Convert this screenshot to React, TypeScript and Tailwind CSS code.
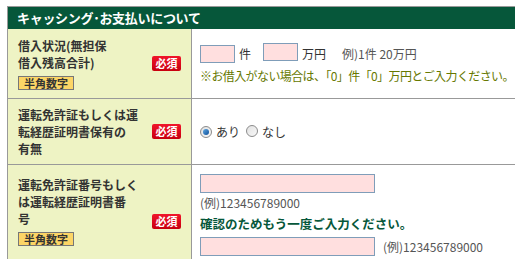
import React from 'react';

const font = { fontFamily: '"Noto Sans CJK JP", "Noto Sans", sans-serif' };

function Required() {
  return (
    <span className="inline-flex h-[15px] w-[29px] shrink-0 items-center justify-center rounded-[2px] bg-gradient-to-b from-[#f0142a] to-[#c8000e] text-[11px] font-bold leading-none text-white">
      必須
    </span>
  );
}

function HalfWidth() {
  return (
    <span className="mt-[5px] inline-flex h-[14px] w-[56px] items-center justify-center border border-[#777] bg-[#fcd566] text-[11px] font-bold leading-none text-[#333]">
      半角数字
    </span>
  );
}

function Radio({ checked }: { checked?: boolean }) {
  return (
    <span className="inline-flex h-[12px] w-[12px] items-center justify-center rounded-full border border-[#8b8b8b] bg-gradient-to-br from-[#e2e2e2] to-[#f8f8f8]">
      {checked && <span className="h-[6px] w-[6px] rounded-full bg-gradient-to-br from-[#5fa8e0] to-[#0a4f9a]" />}
    </span>
  );
}

function Input({ wide }: { wide?: boolean }) {
  return (
    <span
      className={`inline-block border border-[#7f9db9] bg-[#ffdfdf] ${wide ? 'h-[19px] w-[175px]' : 'h-[18px] w-[35px]'}`}
    />
  );
}

export default function App() {
  return (
    <div className="h-[259px] w-[515px] overflow-hidden bg-white pl-[7px] pt-[6px] text-[#333]" style={font}>
      <div className="w-[560px] border border-[#999]">
        {/* Header */}
        <div className="flex h-[22px] items-center bg-[#06573a] pl-[9px] text-[13px] font-bold tracking-[-0.3px] text-white">
          キャッシング･お支払いについて
        </div>

        {/* Row 1 */}
        <div className="flex h-[70px] border-b border-[#999]">
          <div className="flex w-[184px] shrink-0 items-center justify-between border-r border-[#999] bg-[#eef3c4] pl-[10px] pr-[10px]">
            <div className="flex flex-col items-start">
              <div className="whitespace-nowrap text-[12px] font-bold leading-[17px]">
                借入状況(無担保
                <br />
                借入残高合計)
              </div>
              <HalfWidth />
            </div>
            <Required />
          </div>
          <div className="flex flex-1 flex-col justify-center pl-[8px]">
            <div className="flex items-center text-[12px]">
              <Input />
              <span className="ml-[4px]">件</span>
              <span className="ml-[12px]">
                <Input />
              </span>
              <span className="ml-[4px]">万円</span>
              <span className="ml-[16px] text-[#555]">例)1件 20万円</span>
            </div>
            <div className="mt-[3px] whitespace-nowrap text-[12px] leading-[16px] tracking-[-0.6px] text-[#667800]">
              ※お借入がない場合は、「0」件「0」万円とご入力ください。
            </div>
          </div>
        </div>

        {/* Row 2 */}
        <div className="flex h-[66px] border-b border-[#999]">
          <div className="flex w-[184px] shrink-0 items-center justify-between border-r border-[#999] bg-[#eef3c4] pl-[10px] pr-[10px]">
            <div className="whitespace-nowrap text-[12px] font-bold leading-[17px]">
              運転免許証もしくは運
              <br />
              転経歴証明書保有の
              <br />
              有無
            </div>
            <Required />
          </div>
          <div className="flex flex-1 items-center pl-[8px] text-[12px]">
            <Radio checked />
            <span className="ml-[4px]">あり</span>
            <span className="ml-[6px]">
              <Radio />
            </span>
            <span className="ml-[4px]">なし</span>
          </div>
        </div>

        {/* Row 3 */}
        <div className="flex h-[112px]">
          <div className="flex w-[184px] shrink-0 items-center justify-between border-r border-[#999] bg-[#eef3c4] pl-[10px] pr-[10px]">
            <div className="mb-[20px] flex flex-col items-start">
              <div className="whitespace-nowrap text-[12px] font-bold leading-[17px]">
                運転免許証番号もしく
                <br />
                は運転経歴証明書番
                <br />
                号
              </div>
              <HalfWidth />
            </div>
            <Required />
          </div>
          <div className="flex flex-1 flex-col items-start pl-[8px] pt-[9px] text-[12px]">
            <Input wide />
            <div className="mt-[2px] leading-[16px] text-[#555]">(例)123456789000</div>
            <div className="mt-[5px] text-[12.5px] font-bold leading-[16px] text-[#06573a]">
              確認のためもう一度ご入力ください。
            </div>
            <div className="mt-[5px] flex items-center">
              <Input wide />
              <span className="ml-[8px] text-[#555]">(例)123456789000</span>
            </div>
          </div>
        </div>
      </div>
    </div>
  );
}
